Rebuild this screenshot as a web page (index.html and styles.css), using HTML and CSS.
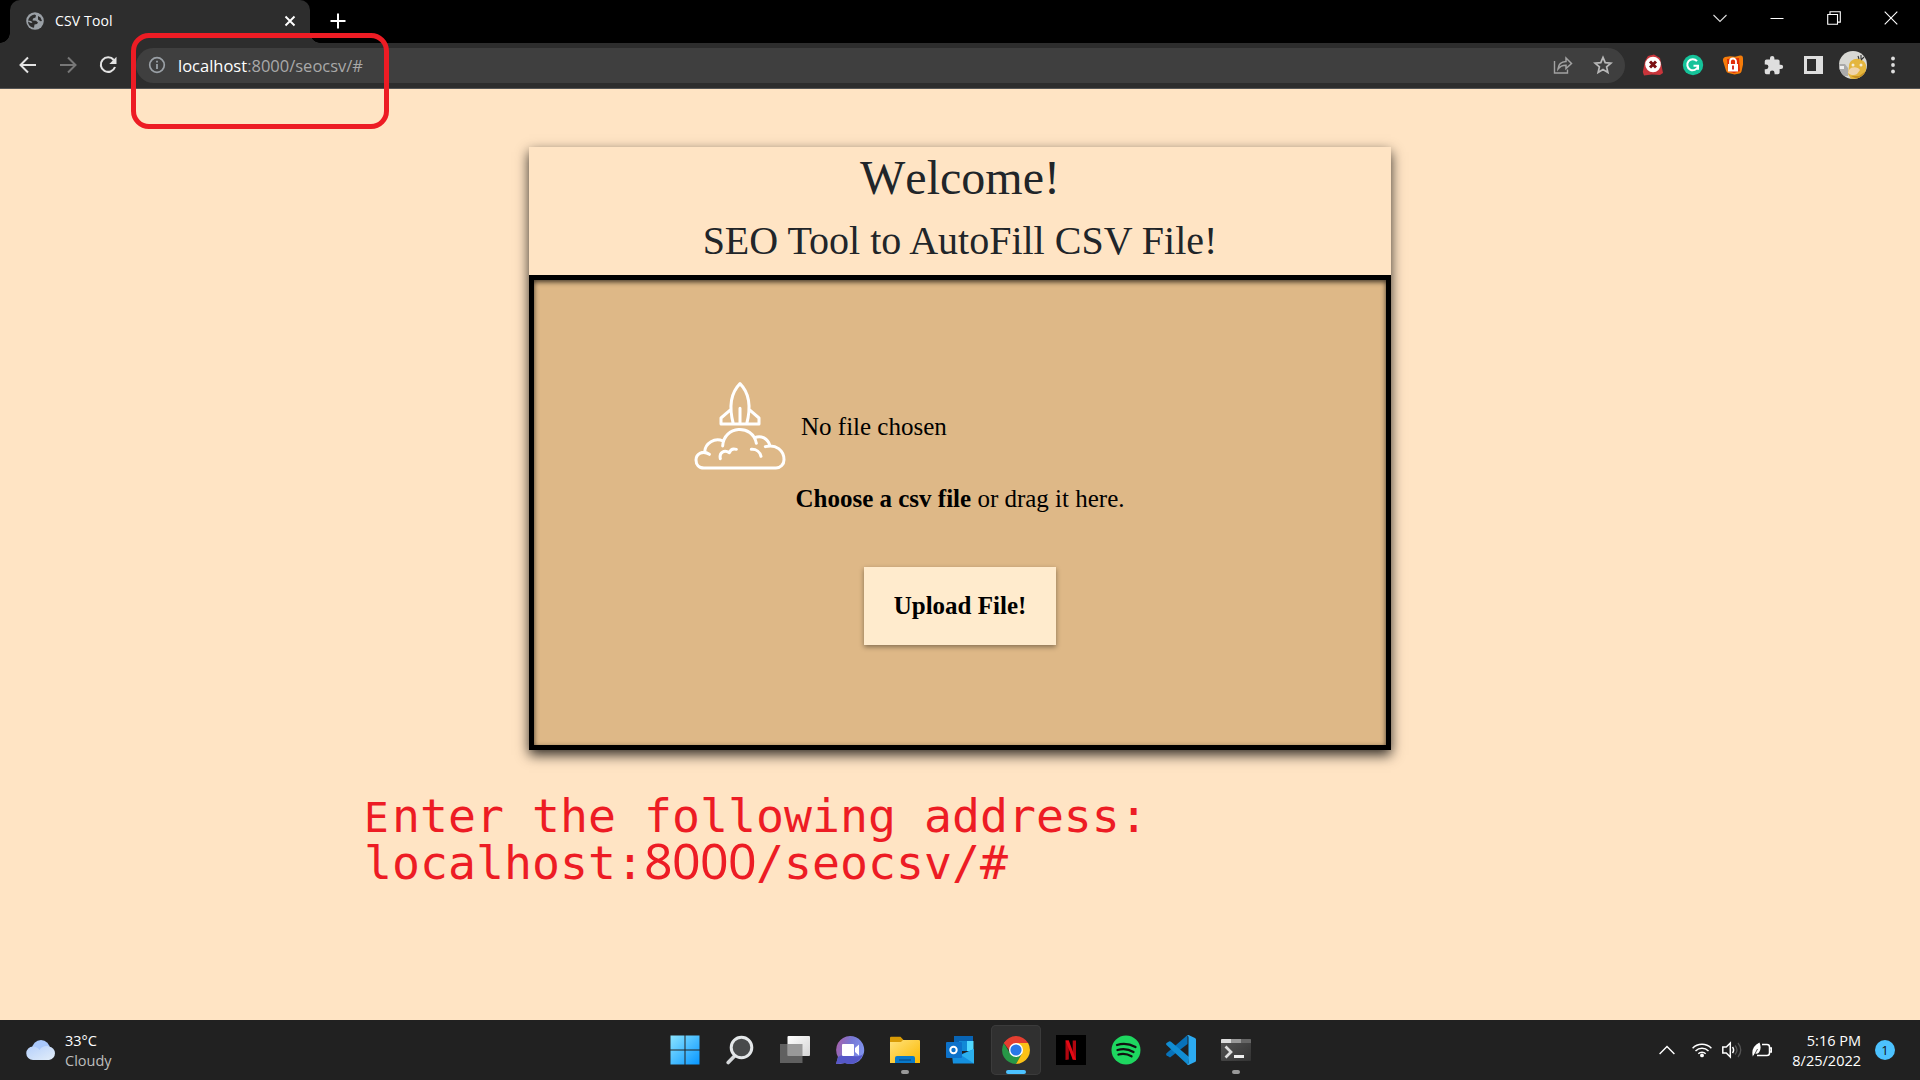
FILE: index.html
```html
<!DOCTYPE html>
<html lang="en">
<head>
<meta charset="utf-8">
<title>CSV Tool</title>
<link rel="stylesheet" href="styles.css">
</head>
<body>
<div class="screen">
  <header class="tabstrip">
    <div class="tab">
      <svg class="globe" viewBox="0 0 18 18" width="18" height="18"><circle cx="9" cy="9" r="8.800" fill="#9aa0a6"/><path d="M2 8.500C3 5 5 3 8.500 2.500L10 3.200 9.500 5.500 7 6.500 6.500 8.500 10 8.800 12 10.500 11 12 8.500 12.500 8 15.800C4.500 15.500 2 12.500 2 9.500L5 11 6.500 10.500 5 9ZM12 4L14.500 5.500 16 9 14.500 9.300 12 7.500Z" fill="#2d2d2d"/></svg>
      <span class="tab-title">CSV Tool</span>
      <svg class="tab-close" viewBox="0 0 12 12" width="12" height="12"><path d="M1.500 1.500l9 9m0-9l-9 9" stroke="#fff" stroke-width="1.900"/></svg>
    </div>
    <svg class="new-tab" viewBox="0 0 16 16" width="16" height="16"><path d="M8 .5v15M.5 8h15" stroke="#fff" stroke-width="2"/></svg>
    <div class="window-controls">
      <svg viewBox="0 0 14 14" width="14" height="14"><path d="M.5 4l6.500 6.500L13.500 4" fill="none" stroke="#ddd" stroke-width="1.100"/></svg>
      <svg viewBox="0 0 14 14" width="14" height="14"><path d="M.5 7.500h13" stroke="#fff"/></svg>
      <svg viewBox="0 0 14 14" width="14" height="14"><path d="M.7 3.500h9.800v9.800H.7zM3 3.500V.8h10.300v10.300h-2.800" fill="none" stroke="#fff" stroke-width="1.100"/></svg>
      <svg viewBox="0 0 14 14" width="14" height="14"><path d="M.7.7l12.600 12.600m0-12.600L.7 13.300" stroke="#fff" stroke-width="1.100"/></svg>
    </div>
  </header>

  <div class="toolbar">
    <div class="cell"><svg viewBox="0 0 18 18" width="18" height="18"><path d="M17 9H2M9 1.500L1.500 9 9 16.500" fill="none" stroke="#e3e3e3" stroke-width="2"/></svg></div>
    <div class="cell"><svg viewBox="0 0 18 18" width="18" height="18"><path d="M1 9h15M9 1.500L16.500 9 9 16.500" fill="none" stroke="#777" stroke-width="2"/></svg></div>
    <div class="cell"><svg viewBox="0 0 18 18" width="18" height="18"><path d="M14.800 4A7.300 7.300 0 1 0 16 11" fill="none" stroke="#e3e3e3" stroke-width="2.100"/><path d="M17.500.8V8h-7.200z" fill="#e3e3e3"/></svg></div>
    <div class="omnibox">
      <svg viewBox="0 0 18 18" width="18" height="18"><circle cx="9" cy="9" r="7.300" fill="none" stroke="#9aa0a6" stroke-width="1.700"/><path d="M9 8v5M9 4.700v1.900" stroke="#9aa0a6" stroke-width="1.800"/></svg>
      <span class="url"><span class="host">localhost</span>:8000/seocsv/#</span>
      <div class="cell"><svg viewBox="0 0 20 20" width="20" height="20"><path d="M1.500 6v12h13v-3.500" fill="none" stroke="#a2a2a2" stroke-width="1.400"/><path d="M5 14c.4-4.700 3.300-7.200 8-7.400V3l5.500 5.500L13 13.500V10.300c-3.500 0-6 1-8 3.700z" fill="none" stroke="#a2a2a2" stroke-width="1.500"/></svg></div>
      <div class="cell"><svg viewBox="0 0 20 20" width="20" height="20"><path d="M10 2.400l2.200 5.300 5.700.5-4.300 3.700 1.300 5.600-4.900-3-4.900 3 1.300-5.600L2.100 8.200l5.700-.5z" fill="none" stroke="#b8b8b8" stroke-width="1.700"/></svg></div>
    </div>
    <div class="cell"><svg viewBox="0 0 22 22" width="22" height="22"><path d="M6 2l6-1.500 6 3.500 2 10 1 5-3 2-8-.5-8 1L.8 18 3 7z" fill="#c9353b"/><circle cx="11" cy="10.500" r="7.800" fill="#fff"/><path d="M8 7.500l6 6m0-6l-6 6" stroke="#7c1014" stroke-width="3"/></svg></div>
    <div class="cell"><svg viewBox="0 0 22 22" width="22" height="22"><circle cx="11" cy="11" r="10.200" fill="#15c39a"/><path d="M15 7.200A5.500 5.500 0 1 0 16 12.500M11.500 11.800H16v4" fill="none" stroke="#fff" stroke-width="2"/></svg></div>
    <div class="cell"><svg viewBox="0 0 22 22" width="22" height="22"><path d="M3 3l5-.8 5 .5 5-1.200q3-.5 3 3v6l-1.500 7q-.5 1.500-2 2l-5 1-6-1.500q-2-.5-2.500-2.500L1 7q-.5-3 2-4z" fill="#f57c0a"/><path d="M5 5l12-1 1 13-6 2-6-2z" fill="#e12c08"/><rect x="6" y="10" width="10" height="7.500" fill="#fff"/><path d="M8 10V7.500a3 3 0 0 1 6 0V10" fill="none" stroke="#fff" stroke-width="1.800"/><path d="M11 11.500v4" stroke="#d21a10" stroke-width="1.800"/></svg></div>
    <div class="cell"><svg viewBox="0 0 24 24" width="21" height="21"><path d="M20.500 11H19V7a2 2 0 0 0-2-2h-4V3.500a2.500 2.500 0 0 0-5 0V5H4a2 2 0 0 0-2 2v3.800h1.500a2.700 2.700 0 0 1 0 5.400H2V20a2 2 0 0 0 2 2h3.800v-1.500a2.700 2.700 0 0 1 5.400 0V22H17a2 2 0 0 0 2-2v-4h1.500a2.500 2.500 0 0 0 0-5z" fill="#dedede"/></svg></div>
    <div class="cell"><svg viewBox="0 0 19 18" width="19" height="18"><path d="M0 0h19v18H0zM3 3v12h9V3z" fill="#dedede" fill-rule="evenodd"/></svg></div>
    <div class="cell"><svg viewBox="0 0 28 28" width="28" height="28"><clipPath id="face"><circle cx="14" cy="14" r="14"/></clipPath><g clip-path="url(#face)"><path d="M0 0h28v28H0z" fill="#d8d8d4"/><path d="M0 13h6l3 4v8H0z" fill="#aaa"/><path d="M1 15h4v3H1z" fill="#eee"/><path d="M10 15c0-5 5-8 10-7s8 5 7 9l1 11H12l-3-5z" fill="#e4b63e"/><path d="M10 19c3-4 9-3 11 0l-3 4c-3 2-7 1-9-1z" fill="#f0d5ad"/><circle cx="14" cy="14" r="1.500" fill="#f5eed8"/><circle cx="22" cy="14" r="1.500" fill="#f5eed8"/><path d="M20 8l-1-3m3 3l0-4m0 5l3-3" stroke="#333" stroke-width="1.100"/><path d="M12 25l6 3h7l2-8-7 5z" fill="#c99222"/></g></svg></div>
    <div class="cell"><svg viewBox="0 0 4 18" width="4" height="18"><g fill="#dedede"><circle cx="2" cy="2.500" r="1.900"/><circle cx="2" cy="9" r="1.900"/><circle cx="2" cy="15.500" r="1.900"/></g></svg></div>
  </div>

  <main class="page">
    <section class="card">
      <h1>Welcome!</h1>
      <h2>SEO Tool to AutoFill CSV File!</h2>
      <div class="dropzone">
        <div class="file-row">
          <svg viewBox="70 62 276 270" width="92" height="90"><g fill="none" stroke="#fff" stroke-width="9" stroke-linecap="round" stroke-linejoin="round"><path d="M208 70C180 98 174 138 188 191H228C242 138 236 98 208 70zM208 144V190M180 148L151 173V191H265V173L236 148"/><path d="M102 274C104 248 132 231 157 242M156 257C159 195 246 190 257 249M252 232C272 224 291 234 298 256M284 259C316 250 340 271 340 298 340 312 330 323 316 323H100C84 323 76 312 76 299 76 280 97 269 116 282M149 295C145 277 160 267 176 277 179 268 187 264 197 267M242 267C257 266 268 275 271 288"/></g></svg>
          <span>No file chosen</span>
        </div>
        <p class="hint"><strong>Choose a csv file</strong> or drag it here.</p>
        <button class="upload" type="button">Upload File!</button>
      </div>
    </section>
    <div class="note">
      <div><span class="cap">E</span>nter the following address:</div>
      <div>localhost:<span class="digits">8000</span>/seocsv/#</div>
    </div>
  </main>

  <footer class="taskbar">
    <div class="weather">
      <svg viewBox="0 0 30 20" width="30" height="20"><defs><linearGradient id="cloud" x2="1" y2="1"><stop stop-color="#b5d0fc"/><stop offset="1" stop-color="#e2edf8"/></linearGradient></defs><circle cx="15" cy="9" r="9" fill="#a9c8fb"/><path d="M7 6.500C10 6.500 12 8 13.500 10 16 6 20 5.500 23 6.500A6.800 6.800 0 0 1 23 20H7A6.700 6.700 0 0 1 7 6.500z" fill="url(#cloud)"/></svg>
      <div class="reading"><div>33°C</div><div class="condition">Cloudy</div></div>
    </div>
    <nav class="apps">
      <div class="app"><svg viewBox="0 0 30 30" width="30" height="30"><defs><linearGradient id="win" x2="1" y2="1"><stop stop-color="#8be4ff"/><stop offset="1" stop-color="#0796ff"/></linearGradient></defs><path d="M.5.5h14v14H.5zM15.500.5h14v14h-14zM.5 15.500h14v14H.5zM15.500 15.500h14v14h-14z" fill="url(#win)"/></svg></div>
      <div class="app"><svg viewBox="0 0 30 30" width="30" height="30"><path d="M10.500 20L3.200 27.500" stroke="#d5d8da" stroke-width="3.600" stroke-linecap="round"/><circle cx="16.500" cy="12.500" r="10.300" fill="#484a4b" stroke="#e4e7e9" stroke-width="3"/></svg></div>
      <div class="app"><svg viewBox="0 0 30 30" width="30" height="30"><defs><linearGradient id="pane" x2="1" y2="1"><stop stop-color="#fff"/><stop offset="1" stop-color="#d4d4d4"/></linearGradient></defs><rect x="7.500" y="1" width="22.500" height="20" rx="1" fill="url(#pane)"/><path d="M0 9h7.500v12H22.500v7H0z" fill="#606060"/><path d="M7.500 9h15v12h-15z" fill="#999"/></svg></div>
      <div class="app"><svg viewBox="0 0 30 30" width="30" height="30"><defs><linearGradient id="chat" x1="0" y1=".2" x2="1" y2=".5"><stop stop-color="#a85fa8"/><stop offset=".5" stop-color="#7779d5"/><stop offset="1" stop-color="#8093ee"/></linearGradient></defs><path d="M15 1a14 14 0 1 1-5 27c-3 1-6 1-9 1l2-7A14 14 0 0 1 15 1z" fill="url(#chat)"/><path d="M3 22C10 17 22 25 28 19 26 26 18 31 10 28L1 29z" fill="#5558c8"/><rect x="7" y="9" width="12" height="12" rx="1" fill="#fff"/><path d="M20 13l4-3.500v11L20 17z" fill="#fff"/></svg></div>
      <div class="app running"><svg viewBox="0 0 30 30" width="30" height="30"><defs><linearGradient id="folder" x2="1" y2="1"><stop stop-color="#ffe17b"/><stop offset="1" stop-color="#fbb900"/></linearGradient></defs><path d="M0 3q0-1.200 1-1.200h9.500L13.500 5H29v8H0z" fill="#d99b06"/><path d="M0 7h11l2-2h16q1 0 1 1v22H0z" fill="url(#folder)"/><path d="M5 28v-5q0-2 2-2h16q2 0 2 2v5z" fill="#0879ca"/><path d="M9 25h12" stroke="#05437b"/></svg></div>
      <div class="app"><svg viewBox="0 0 30 30" width="30" height="30"><path d="M9 1h19v15H9z" fill="#0864b4"/><path d="M14 6h8v10h-8z" fill="#118ad6"/><path d="M22 6h6.500v10H22z" fill="#50d9ff"/><path d="M6 12l11 7 12-5v14.500H8z" fill="#1590df"/><path d="M29 14v14.500L16 20z" fill="#2cb0ed"/><rect x="1" y="7" width="16" height="16" rx="1" fill="#0d72ca"/><circle cx="8.500" cy="15" r="3.200" fill="none" stroke="#fff" stroke-width="2"/></svg></div>
      <div class="app active"><svg viewBox="0 0 30 30" width="30" height="30"><path d="M15 15H27.100A14 14 0 0 0 2.900 8z" fill="#ea4335"/><path d="M2.900 8A14 14 0 0 0 15 29l6-10.500L15 15 9 18.500z" fill="#279847"/><path d="M15 29A14 14 0 0 0 27.100 8H15l6 10.500z" fill="#fbc116"/><path d="M2.900 8A14 14 0 0 1 27.100 8H15L8 15z" fill="#e43e30"/><circle cx="15" cy="15" r="7" fill="#fff"/><circle cx="15" cy="15" r="5.600" fill="#2878e8"/></svg></div>
      <div class="app"><svg viewBox="0 0 30 30" width="30" height="30"><path d="M0 0h30v30H0z"/><path d="M9.500 5.500h3.300v19l-3.300.4zM16.700 5.500H20v19.400l-3.300-.4z" fill="#b1060f"/><path d="M9.500 5.500h3.300L20 24.900l-3.300-.4z" fill="#e50914"/></svg></div>
      <div class="app"><svg viewBox="0 0 30 30" width="30" height="30"><circle cx="15" cy="15" r="14.500" fill="#1ed760"/><path d="M6 10c6-2 13-1 18.500 2M6.500 15c5-1.500 11-1 16 2M7.500 19.500c5-1.200 9-.6 13 1.800" fill="none" stroke="#111" stroke-width="2.300" stroke-linecap="round"/></svg></div>
      <div class="app"><svg viewBox="0 0 30 30" width="30" height="30"><path d="M21.500 0v9L4 22.500l-3.500-2.200q-.8-1 0-2z" fill="#0872b9"/><path d="M.5 10q-.8-1 0-2L3 6.500q1-.6 2 .2L23 22l-1 8z" fill="#118dd3"/><path d="M21 .3L22.500 0 29 3q1 .5 1 1.500v21q0 1-1 1.500l-6.500 3L21 29.500q1.500 0 1.500-2v-25q0-2-1.500-2.200z" fill="#2caaf0"/></svg></div>
      <div class="app running"><svg viewBox="0 0 30 30" width="30" height="30"><defs><linearGradient id="term" x2="1" y2="1"><stop stop-color="#555"/><stop offset="1" stop-color="#333"/></linearGradient></defs><rect y="4" width="30" height="22" rx="1" fill="url(#term)"/><path d="M0 8V5q0-1 1-1h9v4z" fill="#ddd"/><path d="M10 4h10v4H10z" fill="#999"/><path d="M20 4h9q1 0 1 1v3H20z" fill="#666"/><path d="M4.500 11.500L10 17l-5.500 5.500" fill="none" stroke="#ddd" stroke-width="2.700"/><path d="M13 21.500h10" stroke="#eee" stroke-width="3"/></svg></div>
    </nav>
    <div class="tray">
      <svg class="up" viewBox="0 0 16 10" width="16" height="10"><path d="M.6 9L8 1.500 15.400 9" fill="none" stroke="#fff" stroke-width="1.400"/></svg>
      <svg viewBox="0 0 20 16" width="20" height="16"><g fill="none" stroke="#fff" stroke-width="1.500"><path d="M.6 6.200a13.300 13.300 0 0 1 18.800 0M3.500 9a9.200 9.200 0 0 1 13 0M6.300 11.800a5.200 5.200 0 0 1 7.400 0"/></g><circle cx="10" cy="13.400" r="1.900" fill="#fff"/></svg>
      <svg viewBox="0 0 20 18" width="20" height="18"><path d="M.8 6h3.500l4-4v14l-4-4H.8zM10.500 6q2.200 3 0 6" fill="none" stroke="#fff" stroke-width="1.500"/><path d="M13 4.500q4 4.500 0 9M16 2q5.500 7 0 14" fill="none" stroke="#555" stroke-width="1.300"/></svg>
      <svg viewBox="0 0 20 16" width="20" height="16"><path d="M10 2.500h5q2.500 0 2.500 2.500v6q0 2.500-2.500 2.500H5M18 6h1.300v4H18" fill="none" stroke="#fff" stroke-width="1.500"/><path d="M7.500.5q2.500 6-.5 10-2 2-4 1L.8 14.500Q-1.500 5 7.500.5z" fill="#fff"/><path d="M1.500 14.500L5.500 7" stroke="#222" stroke-width=".8"/></svg>
      <div class="clock"><div>5:16 PM</div><div>8/25/2022</div></div>
      <span class="badge">1</span>
    </div>
  </footer>
  <div class="highlight"></div>
</div>
</body>
</html>
```
FILE: styles.css
```css
* { box-sizing: border-box; }
body { margin: 0; font-family: "Open Sans", "Noto Sans", sans-serif; }
svg { display: block; flex: none; }
.screen { position: relative; display: flex; flex-direction: column; width: 1920px; height: 1080px; overflow: hidden; background: #ffe4c4; }

.tabstrip { display: flex; height: 43px; padding-left: 10px; background: #000; }
.tab { position: relative; display: flex; align-items: center; width: 300px; height: 43px; padding: 0 14px 1px 16px; border-radius: 10px 10px 0 0; background: #2d2d2d; color: #fff; font-size: 14px; }
.tab::before, .tab::after { content: ""; position: absolute; bottom: 0; width: 10px; height: 10px; }
.tab::before { left: -10px; background: radial-gradient(circle at 0 0, #000 9.500px, #2d2d2d 10px); }
.tab::after { right: -10px; background: radial-gradient(circle at 100% 0, #000 9.500px, #2d2d2d 10px); }
.tab-title { flex: 1; margin: 0 0 2px 11px; letter-spacing: .15px; }
.new-tab { margin: 13px 0 0 20px; }
.window-controls { display: flex; gap: 43px; margin: 11px 22px 0 auto; }

.toolbar { display: flex; align-items: center; height: 46px; padding: 0 7px 1px 8px; background: #2d2d2d; border-bottom: 1px solid #555; }
.cell { display: flex; align-items: center; justify-content: center; width: 40px; flex: none; }
.omnibox { display: flex; align-items: center; flex: 1; height: 35px; margin: 0 8px 0 8px; padding: 0 2px 0 12px; border-radius: 18px; background: #3f3f3f; }
.url { flex: 1; margin-left: 12px; font-size: 16.500px; color: #a9a9a9; }
.host { color: #fff; }

.page { flex: 1; padding-top: 58px; font-family: "Liberation Serif", serif; }
.card { width: 862px; height: 603px; margin: 0 auto; text-align: center; color: #212529; box-shadow: 0 5px 12px rgba(0, 0, 0, .8); }
h1, h2 { margin: 0; font-weight: 400; }
h1 { height: 66px; font-size: 48px; line-height: 62px; font-kerning: none; }
h2 { height: 62px; font-size: 40px; line-height: 56px; }
.dropzone { height: 475px; padding-top: 101px; border: 5px solid #000; background: #deb887; box-shadow: inset 0 2px 5px rgba(0, 0, 0, .7); color: #000; font-size: 25px; }
.file-row { display: flex; align-items: center; gap: 15px; padding-left: 160px; height: 90px; }
.file-row span { padding-top: 2px; }
.hint { margin: 13px 0 0; line-height: 30px; }
.upload { display: block; width: 192px; height: 78px; margin: 53px auto 0; border: 0; background: #ffebcd; box-shadow: 0 2px 5px rgba(0, 0, 0, .4); color: #000; font: bold 25px "Liberation Serif", serif; }
.note { margin: 43px 0 0 364px; color: #ed1c24; font: 46.500px/47px "DejaVu Sans Mono", monospace; white-space: nowrap; }
.note div { display: flex; align-items: baseline; height: 47px; }
.note div:first-child { white-space: pre; }
.cap { font-size: 41px; letter-spacing: 3.300px; line-height: 40px; }
.digits { font-family: "Noto Sans", sans-serif; font-size: 50px; letter-spacing: -.6px; line-height: 40px; }

.taskbar { display: grid; grid-template-columns: 1fr 610px 1fr; align-items: center; height: 60px; background: #212121; color: #fff; font-size: 14.500px; line-height: 20px; }
.weather { display: flex; align-items: center; gap: 9px; padding-left: 26px; }
.reading, .clock { padding-top: 1px; }
.condition { color: #bdbdbd; }
.apps { display: flex; gap: 5.100px; padding-left: 5px; }
.app { position: relative; display: flex; flex: none; align-items: center; justify-content: center; width: 50px; height: 50px; border-radius: 5px; }
.active { background: #303030; box-shadow: inset 0 0 0 1px #3b3b3b; }
.running::after, .active::after { content: ""; position: absolute; bottom: 1px; left: 21px; width: 8px; height: 4px; border-radius: 2px; background: #999; }
.active::after { left: 15px; width: 20px; background: #4cc2ff; }
.tray { display: flex; align-items: center; justify-content: flex-end; gap: 10px; padding-right: 25px; }
.up { margin-right: 7px; }
.clock { width: 79px; margin: 0 4px 0 0; text-align: right; }
.badge { width: 20px; height: 20px; border-radius: 50%; background: #4cc2ff; color: #111; font-size: 13px; text-align: center; }

.highlight { position: absolute; left: 131px; top: 33px; width: 258px; height: 96px; border: 5px solid #ed1c24; border-radius: 18px; }
```
